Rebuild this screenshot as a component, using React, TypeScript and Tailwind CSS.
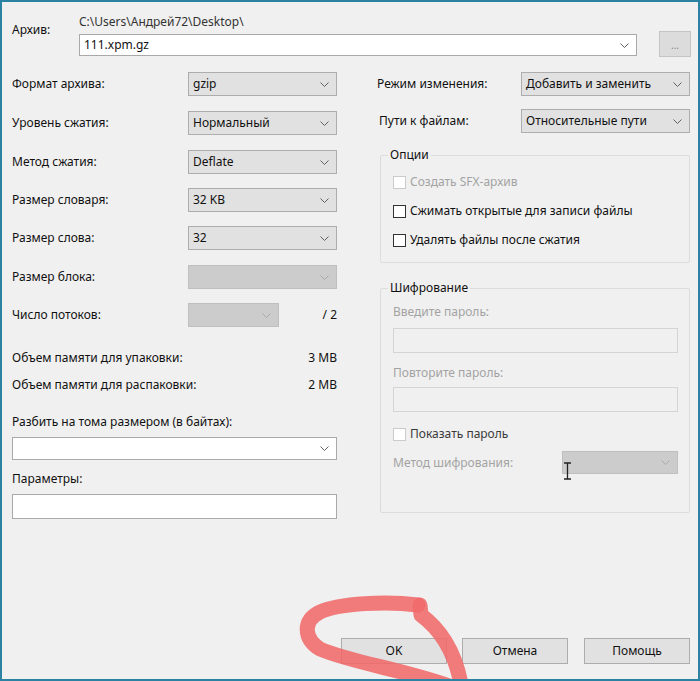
import type { ReactNode } from "react";

function Chevron({ disabled = false }: { disabled?: boolean }) {
  return (
    <svg width="9" height="5" viewBox="0 0 9 5" className="shrink-0">
      <path d="M0.5 0.5 L4.5 4.5 L8.5 0.5" fill="none" stroke={disabled ? "#a8a8a8" : "#606060"} strokeWidth="1" />
    </svg>
  );
}

function Select({ value, width, height = 24, disabled = false, white = false }: { value?: string; width: string; height?: number; disabled?: boolean; white?: boolean }) {
  const tone = disabled
    ? "bg-[#cccccc] border-[#bfbfbf]"
    : white
      ? "bg-white border-[#a9a9a9]"
      : "bg-[#e1e1e1] border-[#adadad]";
  return (
    <div className={`${width} ${tone} flex shrink-0 items-center justify-between border pl-[4px] pr-[7px]`} style={{ height }}>
      <span className="text-[#111]">{value}</span>
      <Chevron disabled={disabled} />
    </div>
  );
}

function Checkbox({ label, disabled = false, soft = false }: { label: string; disabled?: boolean; soft?: boolean }) {
  return (
    <div className="flex h-[16px] items-center gap-[4px]">
      <span className={`h-[13px] w-[13px] border bg-white ${disabled || soft ? "border-[#cbcbcb]" : "border-[#333]"}`} />
      <span className={disabled ? "text-[#a3a3a3]" : soft ? "text-[#3a3a3a]" : "text-[#111]"}>{label}</span>
    </div>
  );
}

function Row({ label, children, className = "" }: { label: string; children: ReactNode; className?: string }) {
  return (
    <div className={`flex h-[24px] items-center ${className}`}>
      <span className="w-[176px] shrink-0">{label}</span>
      {children}
    </div>
  );
}

function Button({ children }: { children: ReactNode }) {
  return <div className="flex h-[26px] w-[106px] items-center justify-center border border-[#adadad] bg-[#e1e1e1]">{children}</div>;
}

export default function App() {
  return (
    <div className="relative flex h-[681px] w-[700px] flex-col overflow-hidden border-2 border-[#2c82a3] bg-[#f0f0f0] text-[12px] leading-[16px] text-[#111] [font-family:'Noto_Sans',sans-serif]">
      {/* archive path */}
      <div className="flex pl-[10px] pt-[12px]">
        <span className="w-[67px] shrink-0 pt-[8px]">Архив:</span>
        <div className="flex flex-col">
          <span className="h-[16px] text-[#333]">C:\Users\Андрей72\Desktop\</span>
          <div className="mt-[1px] flex items-start">
            <div className="mt-[3px] flex h-[22px] w-[558px] items-center justify-between border border-[#a9a9a9] bg-white pl-[4px] pr-[7px]">
              <span>111.xpm.gz</span>
              <Chevron />
            </div>
            <div className="ml-[22px] flex h-[26px] w-[32px] items-start justify-center border border-[#c4c4c4] bg-[#dcdcdc] pt-[5px] text-[10px] text-[#8a8a8a]">...</div>
          </div>
        </div>
      </div>

      <div className="mt-[15px] flex pl-[10px]">
        {/* left column */}
        <div className="flex w-[325px] flex-col">
          <Row label="Формат архива:"><Select value="gzip" width="w-[149px]" /></Row>
          <Row label="Уровень сжатия:" className="mt-[15px]"><Select value="Нормальный" width="w-[149px]" /></Row>
          <Row label="Метод сжатия:" className="mt-[15px]"><Select value="Deflate" width="w-[149px]" /></Row>
          <Row label="Размер словаря:" className="mt-[14px]"><Select value="32 KB" width="w-[149px]" /></Row>
          <Row label="Размер слова:" className="mt-[14px]"><Select value="32" width="w-[149px]" /></Row>
          <Row label="Размер блока:" className="mt-[15px]"><Select width="w-[149px]" disabled /></Row>
          <Row label="Число потоков:" className="mt-[14px]">
            <Select width="w-[91px]" disabled />
            <span className="flex-1 text-right">/ 2</span>
          </Row>
          <div className="mt-[23px] flex h-[16px] justify-between">
            <span>Объем памяти для упаковки:</span>
            <span>3 MB</span>
          </div>
          <div className="mt-[11px] flex h-[16px] justify-between">
            <span>Объем памяти для распаковки:</span>
            <span>2 MB</span>
          </div>
          <span className="mt-[21px] h-[16px]">Разбить на тома размером (в байтах):</span>
          <div className="mt-[7px]"><Select width="w-[325px]" height={23} white /></div>
          <span className="mt-[11px] h-[16px]">Параметры:</span>
          <div className="mt-[7px] h-[25px] w-[325px] border border-[#a9a9a9] bg-white" />
        </div>

        {/* right column */}
        <div className="ml-[40px] flex w-[313px] flex-col">
          <div className="flex h-[24px] items-center">
            <span className="w-[144px] shrink-0">Режим изменения:</span>
            <Select value="Добавить и заменить" width="w-[169px]" />
          </div>
          <div className="mt-[13px] flex h-[24px] items-center">
            <span className="w-[144px] shrink-0 pl-[2px]">Пути к файлам:</span>
            <Select value="Относительные пути" width="w-[169px]" />
          </div>

          <fieldset className="ml-[3px] mt-[14px] rounded-[2px] border border-[#dcdcdc] pb-[14px] pl-[7px]">
            <legend className="px-[2px]">Опции</legend>
            <div className="ml-[5px] mt-[11px] flex flex-col gap-[13px]">
              <Checkbox label="Создать SFX-архив" disabled />
              <Checkbox label="Сжимать открытые для записи файлы" />
              <Checkbox label="Удалять файлы после сжатия" />
            </div>
          </fieldset>

          <fieldset className="ml-[3px] mt-[17px] rounded-[2px] border border-[#dcdcdc] pb-[38px] pl-[7px]">
            <legend className="px-[2px]">Шифрование</legend>
            <div className="ml-[5px] flex flex-col">
              <span className="mt-[8px] h-[16px] text-[#a3a3a3]">Введите пароль:</span>
              <div className="mt-[8px] h-[25px] w-[285px] border border-[#d4d4d4] bg-[#f0f0f0]" />
              <span className="mt-[12px] h-[16px] text-[#a3a3a3]">Повторите пароль:</span>
              <div className="mt-[6px] h-[25px] w-[285px] border border-[#d4d4d4] bg-[#f0f0f0]" />
              <div className="mt-[14px]"><Checkbox label="Показать пароль" soft /></div>
              <div className="mt-[9px] flex h-[23px] w-[285px] items-center justify-between">
                <span className="text-[#a3a3a3]">Метод шифрования:</span>
                <Select width="w-[116px]" height={23} disabled />
              </div>
            </div>
          </fieldset>
        </div>
      </div>

      {/* buttons */}
      <div className="mt-auto flex justify-end gap-[15px] pb-[15px] pr-[8px]">
        <Button>OK</Button>
        <Button>Отмена</Button>
        <div className="ml-[1px]"><Button>Помощь</Button></div>
      </div>

      {/* text cursor */}
      <svg className="pointer-events-none absolute left-[561px] top-[460px]" width="9" height="18" viewBox="0 0 9 18">
        <path d="M1 1 H8 M4.5 1 V17 M1 17 H8" stroke="#222" strokeWidth="1.3" fill="none" />
      </svg>

      {/* hand-drawn red mark around OK */}
      <svg className="pointer-events-none absolute left-[290px] top-[590px] z-10" width="190" height="100" viewBox="0 0 190 100">
        <g fill="none" stroke="#f06a6a" strokeOpacity="0.88" strokeWidth="15" strokeLinecap="round" strokeLinejoin="round">
          <path d="M126 13 C95 9 48 11 28 20 C10 29 12 47 28 57 C60 71 120 79 168 98" />
          <path d="M128 13 L129 23 C148 37 164 59 170 98" />
        </g>
      </svg>
    </div>
  );
}
